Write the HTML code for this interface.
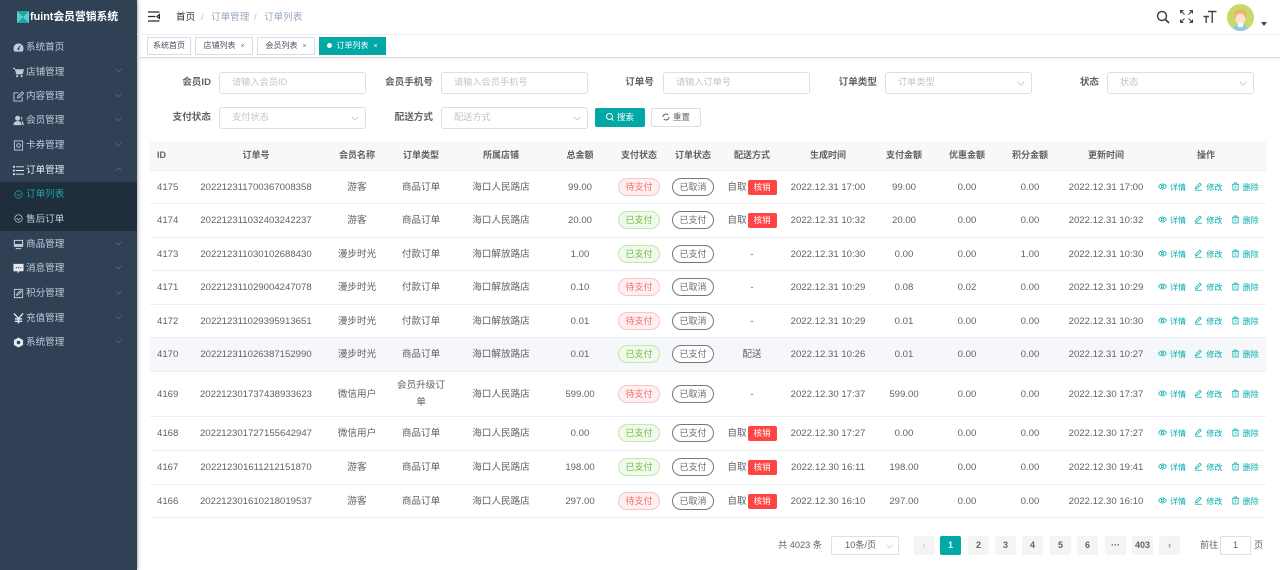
<!DOCTYPE html>
<html lang="zh"><head><meta charset="utf-8"><title>订单列表</title>
<style>
*{box-sizing:border-box}
html,body{margin:0;padding:0;width:1280px;height:570px;overflow:hidden;background:#fff;font-family:"Liberation Sans","Noto Sans CJK SC",sans-serif;font-size:9.6px;color:#606266}
#wrap{position:absolute;left:0;top:0;width:1280px;height:570px;overflow:hidden;filter:blur(.3px)}
.a{position:absolute;white-space:nowrap}
#side{position:absolute;left:0;top:0;width:137px;height:570px;background:#304156;box-shadow:1px 0 3px rgba(0,21,41,.35)}
#sub{position:absolute;left:0;top:182px;width:137px;height:49px;background:#1f2d3d}
.m{position:absolute;left:26px;color:#bfcbd9;line-height:14px;white-space:nowrap}
.ic{position:absolute;left:13px;width:11px;height:11px}
.ch{position:absolute;left:115px;width:7px;height:5px}
.lab{position:absolute;text-align:right;width:70px;font-weight:bold;line-height:14px;color:#606266;white-space:nowrap}
.inp{position:absolute;width:147px;height:22px;border:1px solid #dcdfe6;border-radius:3px;color:#c0c4cc;padding-left:12px;line-height:18px;font-size:9.2px;background:#fff}
.inp svg{position:absolute;right:6px;top:8px}
.t{position:absolute;top:37px;height:18px;border:1px solid #d8dce5;background:#fff;font-size:8px;line-height:16px;color:#495060;text-align:center;white-space:nowrap}
.t i{font-style:normal;font-size:7px;margin-left:5px;color:#777}
table{position:absolute;left:150px;top:141px;width:1116px;border-collapse:collapse;table-layout:fixed}
th{height:29px;background:#f8f8f9;font-size:9px;font-weight:bold;color:#606266;padding:0;border-bottom:1px solid #ebeef5;text-align:center;line-height:14px}
td{padding:2px 0 0;text-align:center;border-bottom:1px solid #ebeef5;color:#606266;white-space:nowrap;line-height:14px}
th:first-child,td:first-child{text-align:left;padding-left:7px}
tr.h34 td{height:34px}tr.h33 td{height:33px}
tr.hl td{background:#f5f7fa}
.p{display:inline-block;position:relative;top:-1px;width:42px;height:18px;line-height:16px;border-radius:9px;font-size:9px;border:1px solid;vertical-align:middle}
.r{background:#fef0f0;border-color:#fbc4c4;color:#f56c6c}
.g{background:#f0f9eb;border-color:#c2e7b0;color:#67c23a}
.k{background:#fff;border-color:#76787c;color:#6b6d71}
.x{display:inline-block;width:29px;height:15px;line-height:15px;background:#f44;color:#fff;border-radius:2px;font-size:8.5px;margin-left:1px;vertical-align:middle}
td.op{text-align:left;padding-left:12px;color:#00acac;font-size:8px}
.op span{display:inline-block;width:36.4px;white-space:nowrap}
.op svg{width:9px;height:9px;vertical-align:-1px;margin-right:3px}
.pg{position:absolute;top:536px;width:21px;height:19px;background:#f4f4f5;color:#606266;text-align:center;line-height:19px;font-size:9px;font-weight:bold;border-radius:2px}
</style></head><body><div id="wrap">
<svg width="0" height="0" style="position:absolute"><defs>
<symbol id="eye" viewBox="0 0 12 12"><path d="M.7 6C2 3.700 3.900 2.600 6 2.600S10 3.700 11.300 6C10 8.300 8.100 9.400 6 9.400S2 8.300.7 6z" fill="none" stroke="#00acac"/><circle cx="6" cy="6" r="1.700" fill="none" stroke="#00acac"/></symbol>
<symbol id="edit" viewBox="0 0 12 12"><path d="M7.800 1.500l1.800 1.800-5.400 5.400-2.300.5.500-2.300zM1.500 11h9" fill="none" stroke="#00acac"/></symbol>
<symbol id="del" viewBox="0 0 12 12"><path d="M1.500 3h9M4.300 3V1.300h3.400V3M2.500 3v7.700h7V3M4.700 5.500h2.600M4.700 8h2.600" fill="none" stroke="#00acac"/></symbol>
<symbol id="cd" viewBox="0 0 8 5"><path d="M.7.7L4 4l3.300-3.300" fill="none" stroke="#52667c" stroke-width=".9"/></symbol>
<symbol id="cu" viewBox="0 0 8 5"><path d="M.7 4L4 .7 7.300 4" fill="none" stroke="#52667c" stroke-width=".9"/></symbol>
<symbol id="cg" viewBox="0 0 8 5"><path d="M.7.7L4 4l3.300-3.300" fill="none" stroke="#c0c4cc" stroke-width=".8"/></symbol>
<symbol id="ck" viewBox="0 0 12 12"><circle cx="6" cy="6" r="5" fill="none" stroke="currentColor"/><path d="M3.500 5.500L6 8l2.500-2.500" fill="none" stroke="currentColor"/></symbol>
</defs></svg>

<div id="side">
<svg class="a" style="left:17px;top:11px" width="12" height="12" viewBox="0 0 12 12"><rect width="12" height="12" fill="#1fa5a8"/><path d="M0 0l6 6 6-6v12L6 6l-6 6z" fill="#5ecfc8"/></svg>
<div class="a" style="left:30px;top:9px;color:#fff;font-weight:bold;font-size:10.800px;line-height:16px">fuint会员营销系统</div>
<div id="sub"></div>

<svg class="ic" style="top:42px" viewBox="0 0 12 12"><path d="M6 1.500a5.500 5.500 0 0 0-5.500 5.500c0 1.500.6 2.700 1.200 3.500h8.600c.6-.8 1.200-2 1.200-3.500A5.500 5.500 0 0 0 6 1.500z" fill="#bfcbd9"/><path d="M6 7l2-3" stroke="#304156"/><circle cx="6" cy="7.500" r="1.200" fill="#304156"/></svg><div class="m" style="top:41px">系统首页</div>
<svg class="ic" style="top:67px" viewBox="0 0 12 12"><path d="M0 1h2l.6 1.500H12L10.500 8H3.500L2 2.300H0z" fill="#bfcbd9"/><circle cx="4.500" cy="10" r="1.200" fill="#bfcbd9"/><circle cx="9.500" cy="10" r="1.200" fill="#bfcbd9"/></svg><div class="m" style="top:66px">店铺管理</div><svg class="ch" style="top:68px"><use href="#cd"/></svg>
<svg class="ic" style="top:91px" viewBox="0 0 12 12"><path d="M10 6.500V11H1V2h5M5 7.500l.5-2L10 1l1.500 1.500L7 7z" fill="none" stroke="#bfcbd9"/></svg><div class="m" style="top:90px">内容管理</div><svg class="ch" style="top:93px"><use href="#cd"/></svg>
<svg class="ic" style="top:115px" viewBox="0 0 12 12"><circle cx="5" cy="3.500" r="2.700" fill="#bfcbd9"/><path d="M.5 11c0-3 2-4.500 4.500-4.500S9.500 8 9.500 11zM8.500 1.500c2 .5 2 3.500.5 4.500 1.800.7 2.700 2.500 2.700 5h-1.300" fill="#bfcbd9"/></svg><div class="m" style="top:114px">会员管理</div><svg class="ch" style="top:117px"><use href="#cd"/></svg>
<svg class="ic" style="top:140px" viewBox="0 0 12 12"><rect x="1.500" y="1" width="9" height="10" fill="none" stroke="#bfcbd9"/><circle cx="6" cy="6" r="2" fill="none" stroke="#bfcbd9"/></svg><div class="m" style="top:139px">卡券管理</div><svg class="ch" style="top:142px"><use href="#cd"/></svg>
<svg class="ic" style="top:165px" viewBox="0 0 12 12"><path d="M0 1h2v2H0zM3 1.500h9v1H3zM0 5h2v2H0zM3 5.500h9v1H3zM0 9h2v2H0zM3 9.500h9v1H3z" fill="#e4e9ef"/></svg><div class="m" style="top:164px;color:#e4e9ef">订单管理</div><svg class="ch" style="top:167px"><use href="#cu"/></svg>
<svg class="ic" style="top:190px;left:14px;width:9px;height:9px;color:#1fa5a8"><use href="#ck"/></svg><div class="m" style="top:188px;color:#1fa5a8">订单列表</div>
<svg class="ic" style="top:214px;left:14px;width:9px;height:9px;color:#bfcbd9"><use href="#ck"/></svg><div class="m" style="top:213px">售后订单</div>
<svg class="ic" style="top:239px" viewBox="0 0 12 12"><path d="M1.500 1.500h9v6.500h-9zM3 10.500h6" fill="none" stroke="#bfcbd9" stroke-width="1.200"/><rect x="1.500" y="5.500" width="9" height="2.500" fill="#bfcbd9"/></svg><div class="m" style="top:238px">商品管理</div><svg class="ch" style="top:241px"><use href="#cd"/></svg>
<svg class="ic" style="top:263px" viewBox="0 0 12 12"><path d="M.5 1h11v8H7l-2 2.500V9H.5z" fill="#e4e9ef"/><path d="M3 4.500h1.200v1.200H3zM5.400 4.500h1.200v1.200H5.400zM7.800 4.500H9v1.200H7.800z" fill="#304156"/></svg><div class="m" style="top:262px">消息管理</div><svg class="ch" style="top:265px"><use href="#cd"/></svg>
<svg class="ic" style="top:288px" viewBox="0 0 12 12"><path d="M1.500 1.500h9v9h-9zM4 8l.5-1.800L8 3l1 1-3.300 3.500z" fill="none" stroke="#bfcbd9"/></svg><div class="m" style="top:287px">积分管理</div><svg class="ch" style="top:290px"><use href="#cd"/></svg>
<svg class="ic" style="top:313px" viewBox="0 0 12 12"><path d="M1 .5l5 5.500 5-5.500M6 6v5.500M2 6.500h8M2 9h8" fill="none" stroke="#e4e9ef" stroke-width="1.500"/></svg><div class="m" style="top:312px">充值管理</div><svg class="ch" style="top:315px"><use href="#cd"/></svg>
<svg class="ic" style="top:337px" viewBox="0 0 12 12"><path d="M6 .5l5 2.800v5.400L6 11.500 1 8.700V3.300z" fill="#e4e9ef"/><circle cx="6" cy="6" r="1.900" fill="#304156"/></svg><div class="m" style="top:336px">系统管理</div><svg class="ch" style="top:339px"><use href="#cd"/></svg>
</div>

<svg class="a" style="left:148px;top:11px" width="12" height="11" viewBox="0 0 12 11"><path d="M0 1h11.500M0 5.500h7.500M0 10h11.500M11.500 3.500L9 5.500l2.500 2z" fill="none" stroke="#2a2a2a" stroke-width="1.200"/></svg>
<div class="a" style="left:176px;top:11px;line-height:14px;color:#303133">首页</div>
<div class="a" style="left:201px;top:11px;line-height:14px;color:#c0c4cc">/</div>
<div class="a" style="left:211px;top:11px;line-height:14px;color:#97a8be">订单管理</div>
<div class="a" style="left:254px;top:11px;line-height:14px;color:#c0c4cc">/</div>
<div class="a" style="left:264px;top:11px;line-height:14px;color:#97a8be">订单列表</div>

<svg class="a" style="left:1156px;top:10px" width="15" height="14" viewBox="0 0 15 14"><circle cx="6" cy="6" r="4.500" fill="none" stroke="#444" stroke-width="1.500"/><path d="M9.500 9.500l3.500 3.500" stroke="#444" stroke-width="1.800"/></svg>
<svg class="a" style="left:1180px;top:10px" width="13" height="13" viewBox="0 0 13 13"><path d="M0 0h4L0 4zM13 0v4L9 0zM0 13V9l4 4zM13 13H9l4-4z" fill="#444"/><path d="M2 2l2.500 2.500M11 2L8.500 4.500M2 11l2.500-2.500M11 11L8.500 8.500" stroke="#444"/></svg>
<svg class="a" style="left:1203px;top:10px" width="14" height="14" viewBox="0 0 14 14"><path d="M5 1.500h8.500M9.200 1.500V13M.5 6.500h5.500M3.200 6.500V13" fill="none" stroke="#444" stroke-width="1.400"/></svg>
<svg class="a" style="left:1227px;top:4px" width="27" height="27" viewBox="0 0 27 27"><defs><clipPath id="c"><circle cx="13.500" cy="13.500" r="13.500"/></clipPath></defs><g clip-path="url(#c)"><rect width="27" height="27" fill="#c9d96a"/><path d="M6 27c0-5 3-7 7.500-7s7.500 2 7.500 7z" fill="#8ecae6"/><path d="M7 13c0-6 3-8 6.500-8S20 7 20 13c-1 1-1.500 2-2 2H9c-.5 0-1-1-2-2z" fill="#f3b26b"/><ellipse cx="13.500" cy="15" rx="5" ry="5.500" fill="#fde4d0"/><rect x="11" y="19" width="5" height="4" fill="#fff"/></g></svg>
<svg class="a" style="left:1261px;top:22px" width="6" height="4" viewBox="0 0 6 4"><path d="M0 0h6L3 4z" fill="#444"/></svg>

<div class="a" style="left:137px;top:34px;width:1143px;height:24px;border-top:1px solid #f0f0f0;border-bottom:1px solid #d8dce5;box-shadow:0 1px 2px rgba(0,0,0,.06)"></div>
<div class="t" style="left:147px;width:44px">系统首页</div>
<div class="t" style="left:195px;width:58px">店铺列表<i>×</i></div>
<div class="t" style="left:257px;width:58px">会员列表<i>×</i></div>
<div class="t" style="left:319px;width:67px;background:#00a9a6;border-color:#00a9a6;color:#fff"><span style="display:inline-block;width:5px;height:5px;background:#fff;border-radius:50%;margin-right:4px"></span>订单列表<i style="color:#fff">×</i></div>

<div class="lab" style="left:141px;top:76px">会员ID</div><div class="inp" style="left:219px;top:72px">请输入会员ID</div>
<div class="lab" style="left:363px;top:76px">会员手机号</div><div class="inp" style="left:441px;top:72px">请输入会员手机号</div>
<div class="lab" style="left:584px;top:76px">订单号</div><div class="inp" style="left:663px;top:72px">请输入订单号</div>
<div class="lab" style="left:807px;top:76px">订单类型</div><div class="inp" style="left:885px;top:72px">订单类型<svg width="8" height="5"><use href="#cg"/></svg></div>
<div class="lab" style="left:1029px;top:76px">状态</div><div class="inp" style="left:1107px;top:72px">状态<svg width="8" height="5"><use href="#cg"/></svg></div>
<div class="lab" style="left:141px;top:111px">支付状态</div><div class="inp" style="left:219px;top:107px">支付状态<svg width="8" height="5"><use href="#cg"/></svg></div>
<div class="lab" style="left:363px;top:111px">配送方式</div><div class="inp" style="left:441px;top:107px">配送方式<svg width="8" height="5"><use href="#cg"/></svg></div>
<div class="a" style="left:595px;top:108px;width:50px;height:19px;background:#00a9a6;border-radius:2px;color:#fff;text-align:center;line-height:19px;font-size:8.500px"><svg width="8" height="8" viewBox="0 0 8 8" style="vertical-align:-1px;margin-right:3px"><circle cx="3.500" cy="3.500" r="3" fill="none" stroke="#fff"/><path d="M5.700 5.700L7.500 7.500" stroke="#fff"/></svg>搜索</div>
<div class="a" style="left:651px;top:108px;width:50px;height:19px;background:#fff;border:1px solid #dcdfe6;border-radius:2px;color:#606266;text-align:center;line-height:17px;font-size:8.500px"><svg width="8" height="8" viewBox="0 0 8 8" style="vertical-align:-1px;margin-right:3px"><path d="M1 4a3 3 0 0 1 5.200-2M7 4a3 3 0 0 1-5.200 2" fill="none" stroke="#606266"/></svg>重置</div>

<table>
<colgroup><col style="width:40px"><col style="width:132px"><col style="width:70px"><col style="width:58px"><col style="width:102px"><col style="width:56px"><col style="width:62px"><col style="width:46px"><col style="width:72px"><col style="width:80px"><col style="width:72px"><col style="width:54px"><col style="width:72px"><col style="width:80px"><col style="width:120px"></colgroup>
<thead><tr><th>ID</th><th>订单号</th><th>会员名称</th><th>订单类型</th><th>所属店铺</th><th>总金额</th><th>支付状态</th><th>订单状态</th><th>配送方式</th><th>生成时间</th><th>支付金额</th><th>优惠金额</th><th>积分金额</th><th>更新时间</th><th>操作</th></tr></thead>
<tbody>
<tr class="h33"><td>4175</td><td>202212311700367008358</td><td>游客</td><td>商品订单</td><td>海口人民路店</td><td>99.00</td><td><span class="p r">待支付</span></td><td><span class="p k">已取消</span></td><td>自取<span class="x">核销</span></td><td>2022.12.31 17:00</td><td>99.00</td><td>0.00</td><td>0.00</td><td>2022.12.31 17:00</td><td class="op"><span><svg><use href="#eye"/></svg>详情</span><span><svg><use href="#edit"/></svg>修改</span><span><svg><use href="#del"/></svg>删除</span></td></tr>
<tr class="h34"><td>4174</td><td>202212311032403242237</td><td>游客</td><td>商品订单</td><td>海口人民路店</td><td>20.00</td><td><span class="p g">已支付</span></td><td><span class="p k">已支付</span></td><td>自取<span class="x">核销</span></td><td>2022.12.31 10:32</td><td>20.00</td><td>0.00</td><td>0.00</td><td>2022.12.31 10:32</td><td class="op"><span><svg><use href="#eye"/></svg>详情</span><span><svg><use href="#edit"/></svg>修改</span><span><svg><use href="#del"/></svg>删除</span></td></tr>
<tr class="h33"><td>4173</td><td>202212311030102688430</td><td>漫步时光</td><td>付款订单</td><td>海口解放路店</td><td>1.00</td><td><span class="p g">已支付</span></td><td><span class="p k">已支付</span></td><td>-</td><td>2022.12.31 10:30</td><td>0.00</td><td>0.00</td><td>1.00</td><td>2022.12.31 10:30</td><td class="op"><span><svg><use href="#eye"/></svg>详情</span><span><svg><use href="#edit"/></svg>修改</span><span><svg><use href="#del"/></svg>删除</span></td></tr>
<tr class="h34"><td>4171</td><td>202212311029004247078</td><td>漫步时光</td><td>付款订单</td><td>海口解放路店</td><td>0.10</td><td><span class="p r">待支付</span></td><td><span class="p k">已取消</span></td><td>-</td><td>2022.12.31 10:29</td><td>0.08</td><td>0.02</td><td>0.00</td><td>2022.12.31 10:29</td><td class="op"><span><svg><use href="#eye"/></svg>详情</span><span><svg><use href="#edit"/></svg>修改</span><span><svg><use href="#del"/></svg>删除</span></td></tr>
<tr class="h33"><td>4172</td><td>202212311029395913651</td><td>漫步时光</td><td>付款订单</td><td>海口解放路店</td><td>0.01</td><td><span class="p r">待支付</span></td><td><span class="p k">已取消</span></td><td>-</td><td>2022.12.31 10:29</td><td>0.01</td><td>0.00</td><td>0.00</td><td>2022.12.31 10:30</td><td class="op"><span><svg><use href="#eye"/></svg>详情</span><span><svg><use href="#edit"/></svg>修改</span><span><svg><use href="#del"/></svg>删除</span></td></tr>
<tr class="h34 hl"><td>4170</td><td>202212311026387152990</td><td>漫步时光</td><td>商品订单</td><td>海口解放路店</td><td>0.01</td><td><span class="p g">已支付</span></td><td><span class="p k">已支付</span></td><td>配送</td><td>2022.12.31 10:26</td><td>0.01</td><td>0.00</td><td>0.00</td><td>2022.12.31 10:27</td><td class="op"><span><svg><use href="#eye"/></svg>详情</span><span><svg><use href="#edit"/></svg>修改</span><span><svg><use href="#del"/></svg>删除</span></td></tr>
<tr><td style="height:45px">4169</td><td>202212301737438933623</td><td>微信用户</td><td style="line-height:16.500px">会员升级订<br>单</td><td>海口人民路店</td><td>599.00</td><td><span class="p r">待支付</span></td><td><span class="p k">已取消</span></td><td>-</td><td>2022.12.30 17:37</td><td>599.00</td><td>0.00</td><td>0.00</td><td>2022.12.30 17:37</td><td class="op"><span><svg><use href="#eye"/></svg>详情</span><span><svg><use href="#edit"/></svg>修改</span><span><svg><use href="#del"/></svg>删除</span></td></tr>
<tr class="h34"><td>4168</td><td>202212301727155642947</td><td>微信用户</td><td>商品订单</td><td>海口人民路店</td><td>0.00</td><td><span class="p g">已支付</span></td><td><span class="p k">已支付</span></td><td>自取<span class="x">核销</span></td><td>2022.12.30 17:27</td><td>0.00</td><td>0.00</td><td>0.00</td><td>2022.12.30 17:27</td><td class="op"><span><svg><use href="#eye"/></svg>详情</span><span><svg><use href="#edit"/></svg>修改</span><span><svg><use href="#del"/></svg>删除</span></td></tr>
<tr class="h34"><td>4167</td><td>202212301611212151870</td><td>游客</td><td>商品订单</td><td>海口人民路店</td><td>198.00</td><td><span class="p g">已支付</span></td><td><span class="p k">已支付</span></td><td>自取<span class="x">核销</span></td><td>2022.12.30 16:11</td><td>198.00</td><td>0.00</td><td>0.00</td><td>2022.12.30 19:41</td><td class="op"><span><svg><use href="#eye"/></svg>详情</span><span><svg><use href="#edit"/></svg>修改</span><span><svg><use href="#del"/></svg>删除</span></td></tr>
<tr class="h33"><td>4166</td><td>202212301610218019537</td><td>游客</td><td>商品订单</td><td>海口人民路店</td><td>297.00</td><td><span class="p r">待支付</span></td><td><span class="p k">已取消</span></td><td>自取<span class="x">核销</span></td><td>2022.12.30 16:10</td><td>297.00</td><td>0.00</td><td>0.00</td><td>2022.12.30 16:10</td><td class="op"><span><svg><use href="#eye"/></svg>详情</span><span><svg><use href="#edit"/></svg>修改</span><span><svg><use href="#del"/></svg>删除</span></td></tr>
</tbody></table>

<div class="a" style="left:778px;top:538px;line-height:14px;font-size:9.200px">共 4023 条</div>
<div class="a" style="left:831px;top:536px;width:68px;height:19px;border:1px solid #dcdfe6;border-radius:2px;line-height:17px;padding-left:13px;font-size:9.200px">10条/页<svg width="7" height="5" style="position:absolute;right:5px;top:7px"><use href="#cg"/></svg></div>
<div class="pg" style="left:914px;width:20px;color:#c0c4cc;font-weight:normal">‹</div>
<div class="pg" style="left:940px;background:#00a9a6;color:#fff">1</div>
<div class="pg" style="left:968px">2</div>
<div class="pg" style="left:995px">3</div>
<div class="pg" style="left:1022px">4</div>
<div class="pg" style="left:1050px">5</div>
<div class="pg" style="left:1077px">6</div>
<div class="pg" style="left:1105px">···</div>
<div class="pg" style="left:1132px">403</div>
<div class="pg" style="left:1159px;font-weight:normal">›</div>
<div class="a" style="left:1200px;top:538px;line-height:14px;font-size:9.200px">前往</div>
<div class="a" style="left:1220px;top:536px;width:31px;height:19px;border:1px solid #dcdfe6;border-radius:2px;text-align:center;line-height:17px">1</div>
<div class="a" style="left:1254px;top:538px;line-height:14px;font-size:9.200px">页</div>
</div></body></html>
